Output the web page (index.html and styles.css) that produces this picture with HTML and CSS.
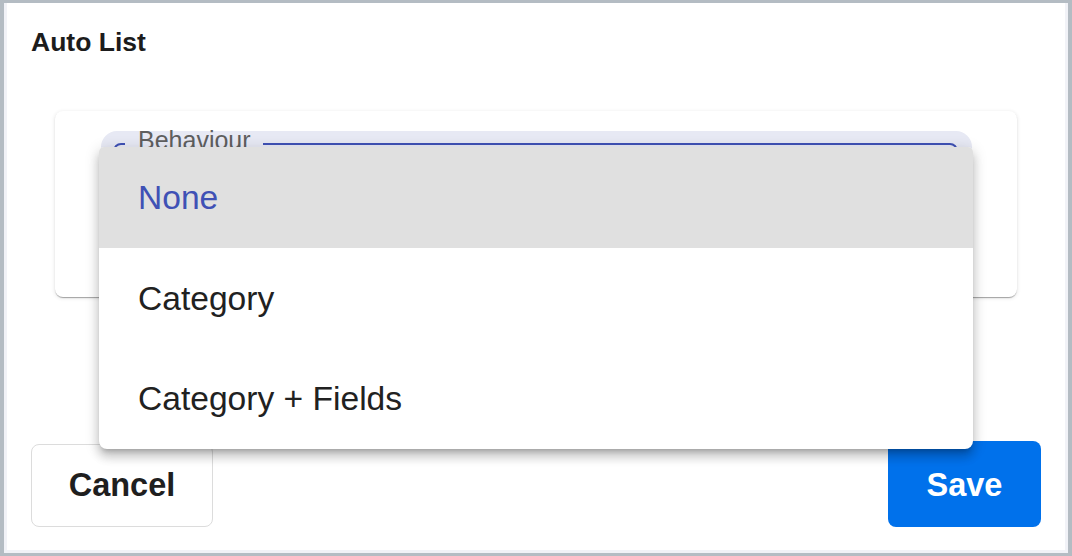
FILE: index.html
```html
<!DOCTYPE html>
<html lang="en">
<head>
  <meta charset="UTF-8">
  <meta name="viewport" content="width=device-width, initial-scale=1.0">
  <title>Auto List</title>
  <link rel="stylesheet" href="styles.css">
</head>
<body>

  <div class="dialog">
    <h1 class="dialog-title">Auto List</h1>

    <div class="card">
      <div class="field">
        <div class="field-outline">
          <span class="field-label">Behaviour</span>
        </div>

        <ul class="menu">
          <li class="menu-item selected">None</li>
          <li class="menu-item">Category</li>
          <li class="menu-item">Category + Fields</li>
        </ul>
      </div>
    </div>

    <div class="actions">
      <button class="btn btn-cancel">Cancel</button>
      <button class="btn btn-save">Save</button>
    </div>
  </div>

</body>
</html>
```

FILE: styles.css
```css
html, body {
  margin: 0;
  height: 556px;
  overflow: hidden;
}

body {
  background-color: #b4bcc3;
  font-family: "Liberation Sans", Arial, sans-serif;
  color: #212121;
}

.dialog {
  box-sizing: border-box;
  height: 550px;
  margin: 3px 4px 3px 4px;
  background-color: #fff;
  border: 3px solid #f1f2f7;
  border-top: none;
  padding: 24px 24px 23px 24px;
  display: flex;
  flex-direction: column;
}

.dialog-title {
  margin: 0;
  font-size: 26.5px;
  line-height: 30px;
  font-weight: bold;
  color: #1c1c1c;
}

.card {
  margin: 54px 0 0 24px;
  width: 962px;
  height: 186px;
  box-sizing: border-box;
  background-color: #fff;
  border-radius: 8px;
  padding: 20px 0 0 46px;
  box-shadow: 0 2px 1px -1px rgba(0, 0, 0, 0.2), 0 1px 1px 0 rgba(0, 0, 0, 0.14), 0 1px 4px 0 rgba(0, 0, 0, 0.12);
}

.field {
  position: relative;
  width: 871px;
  height: 140px;
  box-sizing: border-box;
  padding: 12px 14px 0 12px;
  background-color: #e7e9f4;
  border-radius: 16px 16px 0 0;
}

.field-outline {
  position: relative;
  height: 100px;
  border: 2px solid #3f51b5;
  border-radius: 8px;
}

.field-label {
  position: absolute;
  left: 10px;
  top: -14px;
  padding: 0 12px 0 13px;
  background-color: #e7e9f4;
  font-size: 25px;
  line-height: 18px;
  color: #5f5f5f;
}

.menu {
  position: absolute;
  left: -2px;
  top: 16px;
  width: 874px;
  margin: 0;
  padding: 0;
  list-style: none;
  background-color: #fff;
  border-radius: 5px 5px 8px 8px;
  overflow: hidden;
  box-shadow: 0 5px 5px -3px rgba(0, 0, 0, 0.2), 0 8px 10px 1px rgba(0, 0, 0, 0.14), 0 3px 14px 2px rgba(0, 0, 0, 0.12);
}

.menu-item {
  height: 101px;
  display: flex;
  align-items: center;
  padding-left: 39px;
  font-size: 33.6px;
  color: #212121;
}

.menu-item:last-child {
  height: 100px;
}

.menu-item.selected {
  background-color: #e0e0e0;
  color: #3f51b5;
}

.actions {
  margin-top: auto;
  display: flex;
  justify-content: space-between;
  align-items: flex-end;
}

.btn {
  font-family: "Liberation Sans", Arial, sans-serif;
  font-size: 32.5px;
  font-weight: bold;
  border-radius: 8px;
  cursor: pointer;
}

.btn-cancel {
  width: 182px;
  height: 83px;
  background-color: #fff;
  border: 1px solid #dcdcdc;
  color: #1f1f1f;
}

.btn-save {
  width: 153px;
  height: 86px;
  padding-top: 3px;
  background-color: #0071eb;
  border: none;
  color: #fff;
}
```
